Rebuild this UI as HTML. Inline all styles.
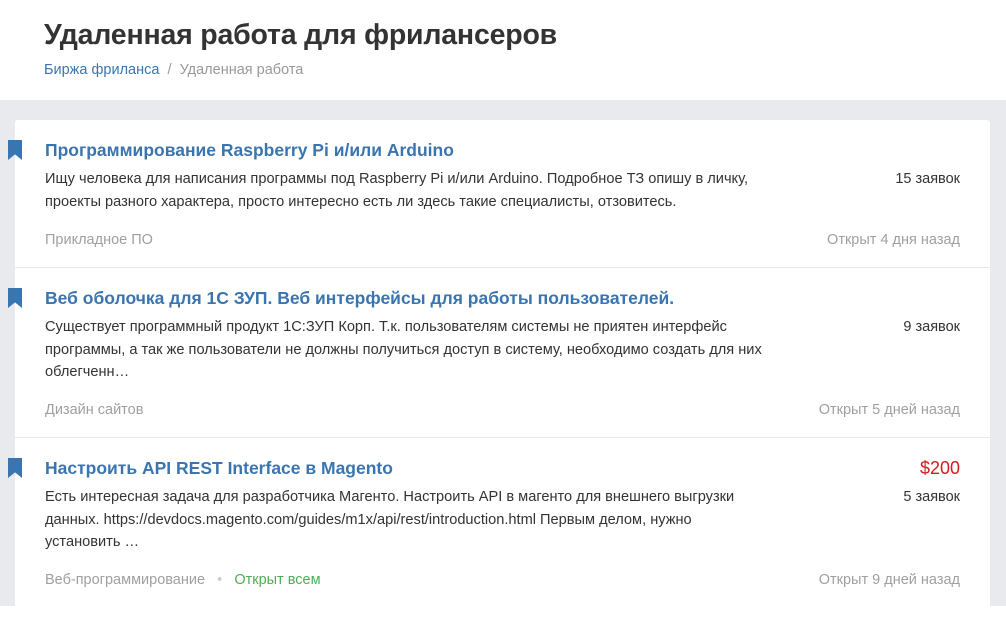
<!DOCTYPE html>
<html><head><meta charset="utf-8"><style>
body{margin:0;width:1006px;height:606px;overflow:hidden;background:#fff;font-family:"Liberation Sans",sans-serif;position:relative}
.hdr{position:absolute;left:0;top:0;width:1006px;height:100px;background:#fff}
h1{position:absolute;left:44px;top:19px;margin:0;font-size:28.5px;font-weight:bold;color:#333;letter-spacing:-0.2px}
.bc{position:absolute;left:44px;top:62px;font-size:14.5px;color:#999}
.bc a{color:#3a75b0;text-decoration:none}
.bg{position:absolute;left:0;top:100px;width:1006px;height:506px;background:#e9eaee}
.card{position:absolute;left:15px;top:120px;width:975px;height:500px;background:#fff;border-radius:3px}
.it{position:absolute;left:0;width:975px;border-bottom:1px solid #e8e8e8}
.t{position:absolute;left:30px;font-size:17.5px;font-weight:bold;color:#3a75b0}
.d{position:absolute;left:30px;width:800px;font-size:14.6px;line-height:22.5px;color:#333;white-space:nowrap}
.n{position:absolute;right:30px;font-size:14.5px;color:#333}
.p{position:absolute;right:30px;font-size:18px;color:#d21c1c}
.c{position:absolute;left:30px;font-size:14.5px;color:#a0a0a0}
.o{position:absolute;right:30px;font-size:14.5px;color:#a0a0a0}
.bm{position:absolute;left:8px;width:14px;height:20px;background:#3a75b0;clip-path:polygon(0 0,100% 0,100% 100%,50% 72%,0 100%)}
</style></head><body>
<div class="hdr"></div>
<h1>Удаленная работа для фрилансеров</h1>
<div class="bc"><a>Биржа фриланса</a>&nbsp;&nbsp;/&nbsp;&nbsp;Удаленная работа</div>
<div class="bg"></div>
<div class="card">
<div class="it" style="top:0;height:147px">
<div class="t" style="top:20px">Программирование Raspberry Pi и/или Arduino</div>
<div class="d" style="top:48px">Ищу человека для написания программы под Raspberry Pi и/или Arduino. Подробное ТЗ опишу в личку,<br>проекты разного характера, просто интересно есть ли здесь такие специалисты, отзовитесь.</div>
<div class="n" style="top:51px">15 заявок</div>
<div class="c" style="top:112px">Прикладное ПО</div>
<div class="o" style="top:112px">Открыт 4 дня назад</div>
</div>
<div class="it" style="top:148px;height:169px">
<div class="t" style="top:20px">Веб оболочка для 1С ЗУП. Веб интерфейсы для работы пользователей.</div>
<div class="d" style="top:48px">Существует программный продукт 1С:ЗУП Корп. Т.к. пользователям системы не приятен интерфейс<br>программы, а так же пользователи не должны получиться доступ в систему, необходимо создать для них<br>облегченн…</div>
<div class="n" style="top:51px">9 заявок</div>
<div class="c" style="top:134px">Дизайн сайтов</div>
<div class="o" style="top:134px">Открыт 5 дней назад</div>
</div>
<div class="it" style="top:318px;height:182px;border:0">
<div class="t" style="top:20px">Настроить API REST Interface в Magento</div>
<div class="p" style="top:20px">$200</div>
<div class="d" style="top:48px">Есть интересная задача для разработчика Магенто. Настроить API в магенто для внешнего выгрузки<br>данных. https://devdocs.magento.com/guides/m1x/api/rest/introduction.html Первым делом, нужно<br>установить …</div>
<div class="n" style="top:51px">5 заявок</div>
<div class="c" style="top:134px">Веб-программирование &nbsp;&nbsp;<span style="color:#ccc">•</span>&nbsp;&nbsp; <span style="color:#4caf50">Открыт всем</span></div>
<div class="o" style="top:134px">Открыт 9 дней назад</div>
</div>
</div>
<div class="bm" style="top:140px"></div>
<div class="bm" style="top:288px"></div>
<div class="bm" style="top:458px"></div>
</body></html>
